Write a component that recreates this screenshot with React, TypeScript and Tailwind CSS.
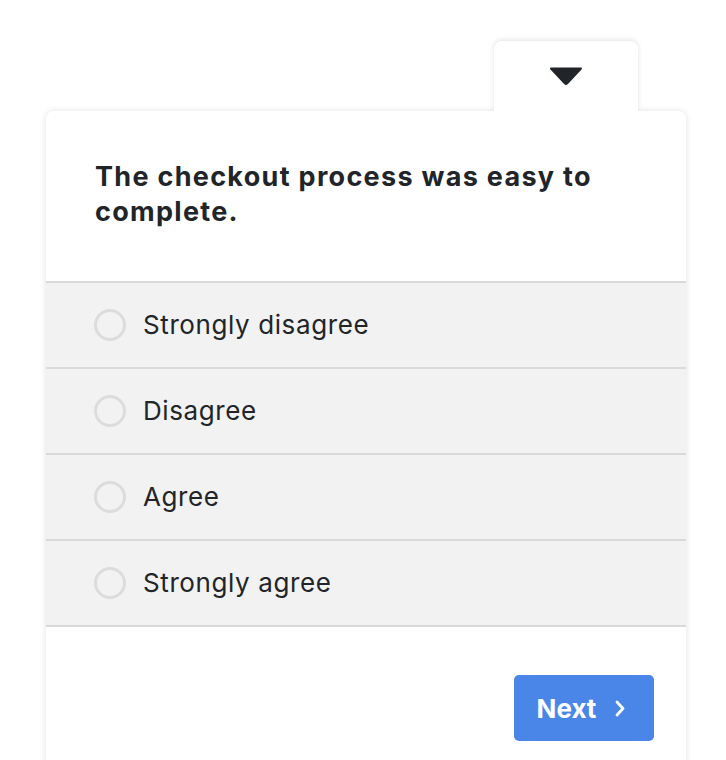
const options = ['Strongly disagree', 'Disagree', 'Agree', 'Strongly agree'];

const App = () => {
  return (
    <div className="min-h-[760px] bg-white pt-[41px] font-['Inter','Liberation_Sans',sans-serif] text-[#212529] overflow-hidden">
      <div className="ml-[46px] w-[640px]">
        {/* Collapse tab */}
        <div className="flex justify-end pr-[48px]">
          <div className="relative z-10 flex h-[70px] w-[144px] items-start justify-center rounded-t-lg bg-white pt-[26px] shadow-[0_-1px_5px_rgba(0,0,0,0.12)]">
            <svg width="34" height="18" viewBox="0 0 34 18">
              <path d="M2 1.5 H32 L18 16.5 Q17 17.5 16 16.5 Z" fill="#212529" stroke="#212529" strokeWidth="2" strokeLinejoin="round" />
            </svg>
          </div>
        </div>

        {/* Card */}
        <div className="relative rounded-t-lg bg-white shadow-[0_0_6px_rgba(0,0,0,0.13)] h-[660px]">
          <div className="relative z-20 rounded-t-lg bg-white px-[49px] pt-[48px] pb-[52px]">
            <h2 className="text-[27px] font-bold leading-[35px] tracking-[1.3px]">
              The checkout process was easy to complete.
            </h2>
          </div>
          <div className="border-t-2 border-[#d9d9d9]">
            {options.map((opt) => (
              <label
                key={opt}
                className="flex h-[86px] items-center gap-[17px] border-b-2 border-[#d9d9d9] bg-[#f2f2f2] pl-[48px]"
              >
                <span className="h-[32px] w-[32px] rounded-full border-[3px] border-[#dcdcdc] bg-[#f2f2f2]" />
                <span className="text-[26px] leading-none tracking-[0.6px]">{opt}</span>
              </label>
            ))}
          </div>
          <div className="flex justify-end pr-[32px] pt-[48px]">
            <button className="flex h-[66px] w-[140px] items-center justify-center gap-[19px] rounded-[5px] bg-[#4a86e8] pr-[6px] text-[26px] font-bold text-white">
              Next
              <svg width="10" height="17" viewBox="0 0 10 17">
                <path d="M2 2 L8 8.5 L2 15" fill="none" stroke="white" strokeWidth="2.8" strokeLinecap="round" strokeLinejoin="round" />
              </svg>
            </button>
          </div>
        </div>
      </div>
    </div>
  );
};

export default App;
